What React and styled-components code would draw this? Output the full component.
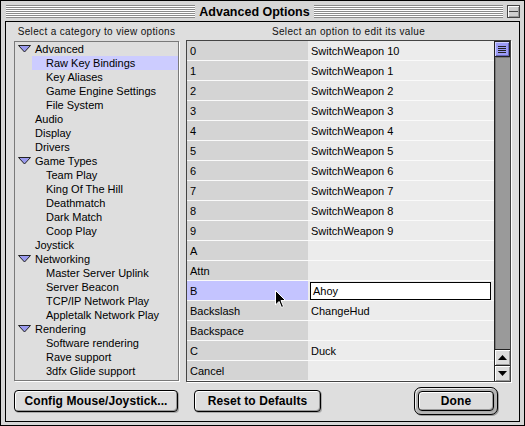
import React from 'react';
import styled, { createGlobalStyle } from 'styled-components';

const Global = createGlobalStyle`
  html, body { margin: 0; padding: 0; background: #d6d6d6; }
  body { font-family: "Liberation Sans", Arial, sans-serif; color: #000; }
  * { box-sizing: border-box; }
`;

const Window = styled.div`
  position: relative;
  width: 525px;
  height: 426px;
  border: 1px solid #000;
  background: #d6d6d6;
  display: flex;
  flex-direction: column;
  overflow: hidden;
`;

const TitleBar = styled.div`
  height: 20px;
  flex: none;
  display: flex;
  align-items: center;
  gap: 4px;
  padding: 1px 4px 0 5px;
`;

const Stripes = styled.div`
  flex: 1;
  height: 13px;
  background: repeating-linear-gradient(to bottom, #8a8a8a 0 1px, #ffffff 1px 2px);
`;

const Title = styled.div`
  font-weight: bold;
  font-size: 12.5px;
  line-height: 16px;
`;

const CollapseBox = styled.div`
  width: 13px;
  height: 13px;
  border: 1px solid #444;
  background: #cfcfcf;
  box-shadow: inset 1px 1px 0 #fff, inset -1px -1px 0 #999;
  display: flex;
  flex-direction: column;
  justify-content: center;
  &::after {
    content: "";
    display: block;
    height: 1px;
    margin: 0 1px;
    background: #444;
  }
`;

const Content = styled.div`
  flex: 1;
  margin: 0 4px 3px 4px;
  border: 1px solid #000;
  background: #dedede;
  display: flex;
  flex-direction: column;
  padding: 4px 7px 0 8px;
`;

const Columns = styled.div`
  display: flex;
  gap: 7px;
`;

const Column = styled.div`
  width: ${p => p.$w}px;
  display: flex;
  flex-direction: column;
`;

const Header = styled.div`
  height: 14px;
  font-size: 10px;
  letter-spacing: 0.35px;
  line-height: 12px;
  text-align: center;
  color: #111;
`;

const TreeBox = styled.div`
  margin-top: 1px;
  height: 340px;
  border: 1px solid #7a7a7a;
  box-shadow: 1px 1px 0 #fff;
  background: #dedede;
  overflow: hidden;
`;

const TreeRow = styled.div`
  height: 14px;
  display: flex;
  align-items: center;
  font-size: 11px;
  margin-left: ${p => (p.$child ? 17 : 2)}px;
  padding-left: ${p => (p.$child ? 14 : 0)}px;
  background: ${p => (p.$selected ? '#ccccff' : 'transparent')};
  white-space: nowrap;
`;

const TriSlot = styled.span`
  width: 18px;
  display: inline-flex;
  align-items: center;
  justify-content: flex-start;
  padding-left: 1px;
`;

const Table = styled.div`
  height: 342px;
  border: 1px solid #444;
  box-shadow: 1px 1px 0 #fff;
  display: flex;
  overflow: hidden;
`;

const Rows = styled.div`
  flex: 1;
  display: flex;
  flex-direction: column;
`;

const Row = styled.div`
  height: 20px;
  flex: none;
  display: flex;
  border-bottom: 1px solid #fafafa;
  font-size: 11px;
`;

const KeyCell = styled.div`
  width: 121px;
  display: flex;
  align-items: center;
  padding-left: 3px;
  background: ${p => (p.$selected ? '#c4c4ff' : '#d4d4d4')};
`;

const ValueCell = styled.div`
  flex: 1;
  display: flex;
  align-items: center;
  padding-left: ${p => (p.$editing ? 2 : 3)}px;
  background: #ececec;
`;

const EditField = styled.div`
  width: 181px;
  height: 18px;
  border: 1px solid #000;
  background: #fff;
  display: flex;
  align-items: center;
  padding-left: 2px;
`;

const ScrollBar = styled.div`
  width: 16px;
  flex: none;
  display: flex;
  flex-direction: column;
  border-left: 1px solid #222;
  background: #9a9a9a;
`;

const Thumb = styled.div`
  height: 16px;
  border: 1px solid #222;
  border-left: none;
  background: #9c9cf6;
  box-shadow: inset 1px 1px 0 #cfcfff, inset -1px -1px 0 #6666bb;
  display: flex;
  align-items: center;
  justify-content: center;
`;

const Track = styled.div`
  flex: 1;
  box-shadow: inset 1px 1px 0 #777;
`;

const ArrowBtn = styled.div`
  height: 16px;
  border-top: 1px solid #222;
  background: #dcdcdc;
  box-shadow: inset 1px 1px 0 #fff, inset -1px -1px 0 #999;
  display: flex;
  align-items: center;
  justify-content: center;
`;

const ButtonRow = styled.div`
  margin-top: 4px;
  height: 30px;
  display: flex;
  align-items: center;
`;

const Button = styled.div`
  width: ${p => p.$w}px;
  height: ${p => p.$h || 22}px;
  margin-left: ${p => p.$ml || 0}px;
  border: 1px solid #000;
  border-radius: 4px;
  background: #dddddd;
  box-shadow: inset 1px 1px 0 #fff, inset -1px -1px 0 #999, 1px 1px 0 #aaa;
  display: flex;
  align-items: center;
  justify-content: center;
  font-weight: bold;
  font-size: 12px;
  letter-spacing: 0.1px;
`;

const DefaultRing = styled.div`
  margin-left: auto;
  margin-right: 14px;
  width: 84px;
  height: 28px;
  border: 1px solid #000;
  border-radius: 7px;
  background: #b4b4b4;
  box-shadow: inset 1px 1px 0 #eee, 1px 1px 0 #999;
  padding: 3px;
  display: flex;
`;

const Cursor = styled.svg`
  position: absolute;
  left: 274px;
  top: 289px;
`;

const Triangle = () => (
  <svg width="13" height="8" viewBox="0 0 13 8">
    <path d="M0.5 0.5 L12.5 0.5 L6.5 7 Z" fill="#9a9aee" stroke="#222" strokeWidth="1" />
  </svg>
);

const tree = [
  { t: 'Advanced', open: true },
  { t: 'Raw Key Bindings', c: true, sel: true },
  { t: 'Key Aliases', c: true },
  { t: 'Game Engine Settings', c: true },
  { t: 'File System', c: true },
  { t: 'Audio' },
  { t: 'Display' },
  { t: 'Drivers' },
  { t: 'Game Types', open: true },
  { t: 'Team Play', c: true },
  { t: 'King Of The Hill', c: true },
  { t: 'Deathmatch', c: true },
  { t: 'Dark Match', c: true },
  { t: 'Coop Play', c: true },
  { t: 'Joystick' },
  { t: 'Networking', open: true },
  { t: 'Master Server Uplink', c: true },
  { t: 'Server Beacon', c: true },
  { t: 'TCP/IP Network Play', c: true },
  { t: 'Appletalk Network Play', c: true },
  { t: 'Rendering', open: true },
  { t: 'Software rendering', c: true },
  { t: 'Rave support', c: true },
  { t: '3dfx Glide support', c: true },
];

const rows = [
  ['0', 'SwitchWeapon 10'],
  ['1', 'SwitchWeapon 1'],
  ['2', 'SwitchWeapon 2'],
  ['3', 'SwitchWeapon 3'],
  ['4', 'SwitchWeapon 4'],
  ['5', 'SwitchWeapon 5'],
  ['6', 'SwitchWeapon 6'],
  ['7', 'SwitchWeapon 7'],
  ['8', 'SwitchWeapon 8'],
  ['9', 'SwitchWeapon 9'],
  ['A', ''],
  ['Attn', ''],
  ['B', 'Ahoy', true],
  ['Backslash', 'ChangeHud'],
  ['Backspace', ''],
  ['C', 'Duck'],
  ['Cancel', ''],
];

export default function App() {
  return (
    <>
      <Global />
      <Window>
        <TitleBar>
          <Stripes />
          <Title>Advanced Options</Title>
          <Stripes />
          <CollapseBox />
        </TitleBar>
        <Content>
          <Columns>
            <Column $w={165}>
              <Header>Select a category to view options</Header>
              <TreeBox>
                {tree.map((n, i) => (
                  <TreeRow key={i} $child={n.c} $selected={n.sel}>
                    {!n.c && <TriSlot>{n.open && <Triangle />}</TriSlot>}
                    {n.t}
                  </TreeRow>
                ))}
              </TreeBox>
            </Column>
            <Column $w={325}>
              <Header>Select an option to edit its value</Header>
              <Table>
                <Rows>
                  {rows.map(([k, v, ed], i) => (
                    <Row key={i}>
                      <KeyCell $selected={ed}>{k}</KeyCell>
                      <ValueCell $editing={ed}>
                        {ed ? <EditField>{v}</EditField> : v}
                      </ValueCell>
                    </Row>
                  ))}
                </Rows>
                <ScrollBar>
                  <Thumb>
                    <svg width="8" height="8" viewBox="0 0 8 8">
                      <path d="M0 1.5H8M0 3.5H8M0 5.5H8M0 7.5H8" stroke="#222" strokeWidth="1" />
                    </svg>
                  </Thumb>
                  <Track />
                  <ArrowBtn>
                    <svg width="9" height="5" viewBox="0 0 9 5"><path d="M4.5 0 L9 5 L0 5 Z" fill="#000" /></svg>
                  </ArrowBtn>
                  <ArrowBtn>
                    <svg width="9" height="5" viewBox="0 0 9 5"><path d="M0 0 L9 0 L4.5 5 Z" fill="#000" /></svg>
                  </ArrowBtn>
                </ScrollBar>
              </Table>
            </Column>
          </Columns>
          <ButtonRow>
            <Button $w={164}>Config Mouse/Joystick...</Button>
            <Button $w={127} $ml={16}>Reset to Defaults</Button>
            <DefaultRing>
              <Button $w={76} $h={20}>Done</Button>
            </DefaultRing>
          </ButtonRow>
        </Content>
        <Cursor width="12" height="19" viewBox="0 0 12 19">
          <path d="M0.5 0.5 L0.5 15 L4 11.5 L6.5 17.5 L8.5 16.5 L6 10.5 L10.5 10.5 Z" fill="#000" stroke="#fff" strokeWidth="1" />
        </Cursor>
      </Window>
    </>
  );
}
